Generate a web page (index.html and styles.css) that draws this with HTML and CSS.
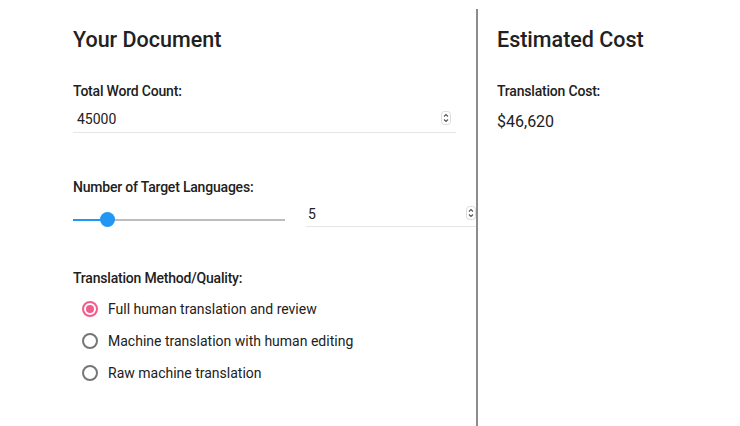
FILE: index.html
```html
<!DOCTYPE html>
<html>
  <head>
    <title>Translation Cost Estimator</title>
    <link rel="stylesheet" href="styles.css">
  </head>
  <body>
    <main class="calculator">
      <section class="panel document">
        <h2>Your Document</h2>

        <div class="field">
          <label for="wordCount">Total Word Count:</label>
          <div class="number-wrap wide">
            <input type="number" id="wordCount" class="number-input" value="45000" />
            <svg class="spinner" viewBox="0 0 10 14" width="10" height="14">
              <rect x="0.5" y="0.5" width="9" height="13" rx="3" fill="#fff" stroke="#dcdcdc" />
              <path d="M3 5.5 L5 3.5 L7 5.5" stroke="#555" stroke-width="1.1" fill="none" />
              <path d="M3 8.5 L5 10.5 L7 8.5" stroke="#555" stroke-width="1.1" fill="none" />
            </svg>
          </div>
        </div>

        <div class="field languages">
          <label for="languages">Number of Target Languages:</label>
          <div class="slider-row">
            <input type="range" id="languages" class="slider" min="1" max="30" value="5" />
            <div class="number-wrap short">
              <input type="number" class="number-input" value="5" min="1" max="30" />
              <svg class="spinner" viewBox="0 0 10 14" width="10" height="14">
                <rect x="0.5" y="0.5" width="9" height="13" rx="3" fill="#fff" stroke="#dcdcdc" />
                <path d="M3 5.5 L5 3.5 L7 5.5" stroke="#555" stroke-width="1.1" fill="none" />
                <path d="M3 8.5 L5 10.5 L7 8.5" stroke="#555" stroke-width="1.1" fill="none" />
              </svg>
            </div>
          </div>
        </div>

        <div class="field">
          <label>Translation Method/Quality:</label>
          <div class="options">
            <label class="option">
              <input type="radio" name="method" checked />
              Full human translation and review
            </label>
            <label class="option">
              <input type="radio" name="method" />
              Machine translation with human editing
            </label>
            <label class="option">
              <input type="radio" name="method" />
              Raw machine translation
            </label>
          </div>
        </div>
      </section>

      <section class="panel estimate">
        <h2>Estimated Cost</h2>
        <div class="field">
          <label>Translation Cost:</label>
          <p class="cost">$46,620</p>
        </div>
      </section>
    </main>
  </body>
</html>
```

FILE: styles.css
```css
*,
*::after,
*::before {
  margin: 0;
  padding: 0;
  box-sizing: border-box;
}

body {
  margin: 0;
  font-family: Roboto, "Liberation Sans", sans-serif;
  color: #212121;
  background-color: #fff;
  overflow: hidden;
}

.calculator {
  display: flex;
  flex-direction: row;
  height: 100vh;
  padding-top: 9px;
}

.panel {
  display: flex;
  flex-direction: column;
}

.document {
  width: 476px;
  flex-shrink: 0;
  padding: 16px 20px 0 73px;
}

.estimate {
  flex: 1;
  position: relative;
  background-color: #fff;
  border-left: 2px solid #8c8c8c;
  padding: 16px 20px 0 19px;
}

h2 {
  font-size: 21.5px;
  font-weight: 500;
  line-height: 30px;
  margin-bottom: 26px;
}

.field {
  display: flex;
  flex-direction: column;
  margin-bottom: 44px;
}

.field.languages {
  margin-bottom: 40px;
}

.field > label {
  font-size: 14px;
  font-weight: 500;
  letter-spacing: -0.2px;
  line-height: 20px;
  margin-bottom: 8px;
}

.number-wrap {
  position: relative;
  flex-shrink: 0;
}

.number-input {
  width: 100%;
  font-family: inherit;
  font-size: 14px;
  color: #212121;
  border: none;
  border-bottom: 1px solid #e6e6e6;
  height: 23px;
  padding: 0 20px 3px 4px;
  outline: none;
  background: transparent;
  -moz-appearance: textfield;
}

.number-input::-webkit-inner-spin-button,
.number-input::-webkit-outer-spin-button {
  -webkit-appearance: none;
  margin: 0;
}

.spinner {
  position: absolute;
  right: 5px;
  top: 2px;
}

.wide {
  width: 383px;
}

.slider-row {
  display: flex;
  flex-direction: row;
  align-items: flex-start;
  gap: 21px;
}

.short {
  width: 175px;
  margin-top: -1px;
}

.short .number-input {
  padding-left: 2px;
}

.slider {
  -webkit-appearance: none;
  appearance: none;
  flex-shrink: 0;
  width: 212px;
  height: 16px;
  margin-top: 7px;
  background: transparent;
}

.slider::-webkit-slider-runnable-track {
  height: 2px;
  background: linear-gradient(to right, #2196f3 0, #2196f3 16.5%, #bdbdbd 16.5%, #bdbdbd 100%);
}

.slider::-webkit-slider-thumb {
  -webkit-appearance: none;
  width: 15px;
  height: 15px;
  border-radius: 50%;
  background-color: #2196f3;
  margin-top: -6.5px;
  border: none;
}

.options {
  display: flex;
  flex-direction: column;
  gap: 12px;
  padding-left: 9px;
  margin-top: 3px;
}

.option {
  display: flex;
  flex-direction: row;
  align-items: center;
  gap: 10px;
  font-size: 14px;
  line-height: 20px;
}

.option input {
  -webkit-appearance: none;
  appearance: none;
  width: 16px;
  height: 16px;
  border: 2px solid #767676;
  border-radius: 50%;
  margin: 0;
  display: grid;
  place-content: center;
}

.option input:checked {
  border-color: #f45b8c;
}

.option input:checked::before {
  content: '';
  width: 8px;
  height: 8px;
  border-radius: 50%;
  background-color: #f45b8c;
}

.cost {
  font-size: 16px;
  line-height: 24px;
  margin-top: 1px;
}
```
